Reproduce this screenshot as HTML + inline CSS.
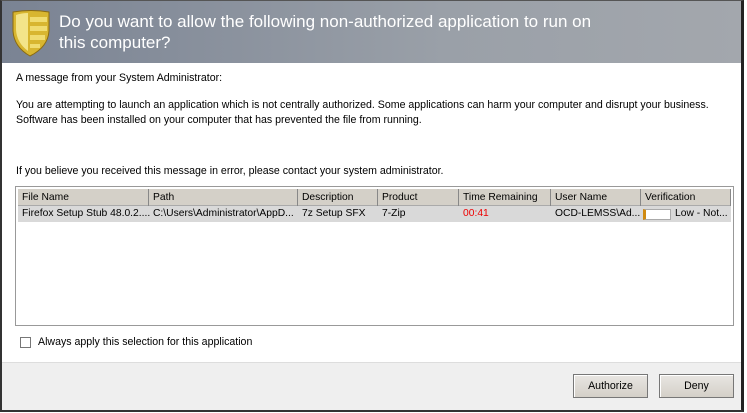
<!DOCTYPE html>
<html><head><style>
*{margin:0;padding:0;box-sizing:border-box}
body{width:747px;height:413px;background:#fff;font-family:"Liberation Sans",Tahoma,sans-serif;font-size:10.7px;color:#000;position:relative;overflow:hidden}
.frame{position:absolute;left:0;top:0;width:744px;height:412px;border-left:2px solid #333;border-right:3px solid #222;border-bottom:3px solid #333;border-top:1px solid #555;background:#fff}
.hdr{position:absolute;left:0;top:0;width:739px;height:62px;background:linear-gradient(90deg,#7a8393,#9aa0a8 60%,#a3a7ad)}
.hdr h1{position:absolute;left:57px;top:10px;font-weight:normal;font-size:17px;line-height:21px;color:#fff;white-space:nowrap}
.t{position:absolute;left:14px;font-size:10.6px;line-height:15px;white-space:nowrap}
.list{position:absolute;left:13px;top:185px;width:719px;height:140px;border:1px solid #999;background:#fff;overflow:hidden}
.hrow{position:absolute;top:2px;left:2px;width:713px;height:17px;background:#d4d0c8;border-bottom:1px solid #aaa}
.hrow span{position:absolute;top:0;height:17px;line-height:17px;padding-left:4px;border-right:1px solid #888;font-size:10.3px}
.drow{position:absolute;top:19px;left:2px;width:713px;height:16px;background:#d9d9d9}
.drow span{position:absolute;top:0;line-height:16px;padding-left:4px;font-size:10.3px;white-space:nowrap}
.foot{position:absolute;left:0;top:361px;width:739px;height:48px;background:#efefef;border-top:1px solid #ddd}
.btn{position:absolute;top:11px;height:24px;border:1px solid #777;background:linear-gradient(#e8e6e2,#d4d0c8);text-align:center;line-height:22px;font-size:10.6px;box-shadow:inset 1px 1px 0 #fff}
</style></head><body>
<div class="frame">
<div class="hdr">
<svg style="position:absolute;left:8px;top:8px" width="42" height="48" viewBox="0 0 42 48">
<path d="M3 3 Q21 0 39 3 L39 22 Q38 38 20 47 Q4 38 3 22 Z" fill="#d8b630" stroke="#8a6a10" stroke-width="1"/>
<path d="M6 6 Q12 4 18 4 L18 42 Q7 34 6 21 Z" fill="#f3e48a"/>
<g fill="#f0dc70"><rect x="20" y="8" width="17" height="5"/><rect x="20" y="17" width="17" height="5"/><rect x="20" y="26" width="15" height="5"/><rect x="20" y="35" width="10" height="4"/></g>
</svg>
<h1>Do you want to allow the following non-authorized application to run on<br>this computer?</h1>
</div>
<div class="t" style="top:70px">A message from your System Administrator:</div>
<div class="t" style="top:97px">You are attempting to launch an application which is not centrally authorized. Some applications can harm your computer and disrupt your business.<br>Software has been installed on your computer that has prevented the file from running.</div>
<div class="t" style="top:163px">If you believe you received this message in error, please contact your system administrator.</div>
<div class="list">
<div class="hrow">
<span style="left:0;width:131px">File Name</span>
<span style="left:131px;width:149px">Path</span>
<span style="left:280px;width:80px">Description</span>
<span style="left:360px;width:81px">Product</span>
<span style="left:441px;width:92px">Time Remaining</span>
<span style="left:533px;width:90px">User Name</span>
<span style="left:623px;width:90px">Verification</span>
</div>
<div class="drow">
<span style="left:0">Firefox Setup Stub 48.0.2....</span>
<span style="left:131px">C:\Users\Administrator\AppD...</span>
<span style="left:280px">7z Setup SFX</span>
<span style="left:360px">7-Zip</span>
<span style="left:441px;color:#e00">00:41</span>
<span style="left:533px">OCD-LEMSS\Ad...</span>
<span style="left:625px;top:3px;width:28px;height:11px;background:#fff;border:1px solid #aaa;border-left:3px solid #d08a10;padding:0"></span>
<span style="left:653px">Low - Not...</span>
</div>
</div>
<div style="position:absolute;left:18px;top:336px;width:11px;height:11px;border:1px solid #777;background:#fff"></div>
<div class="t" style="top:334px;left:36px">Always apply this selection for this application</div>
<div class="foot">
<div class="btn" style="left:571px;width:75px">Authorize</div>
<div class="btn" style="left:657px;width:75px">Deny</div>
</div>
</div>
</body></html>
